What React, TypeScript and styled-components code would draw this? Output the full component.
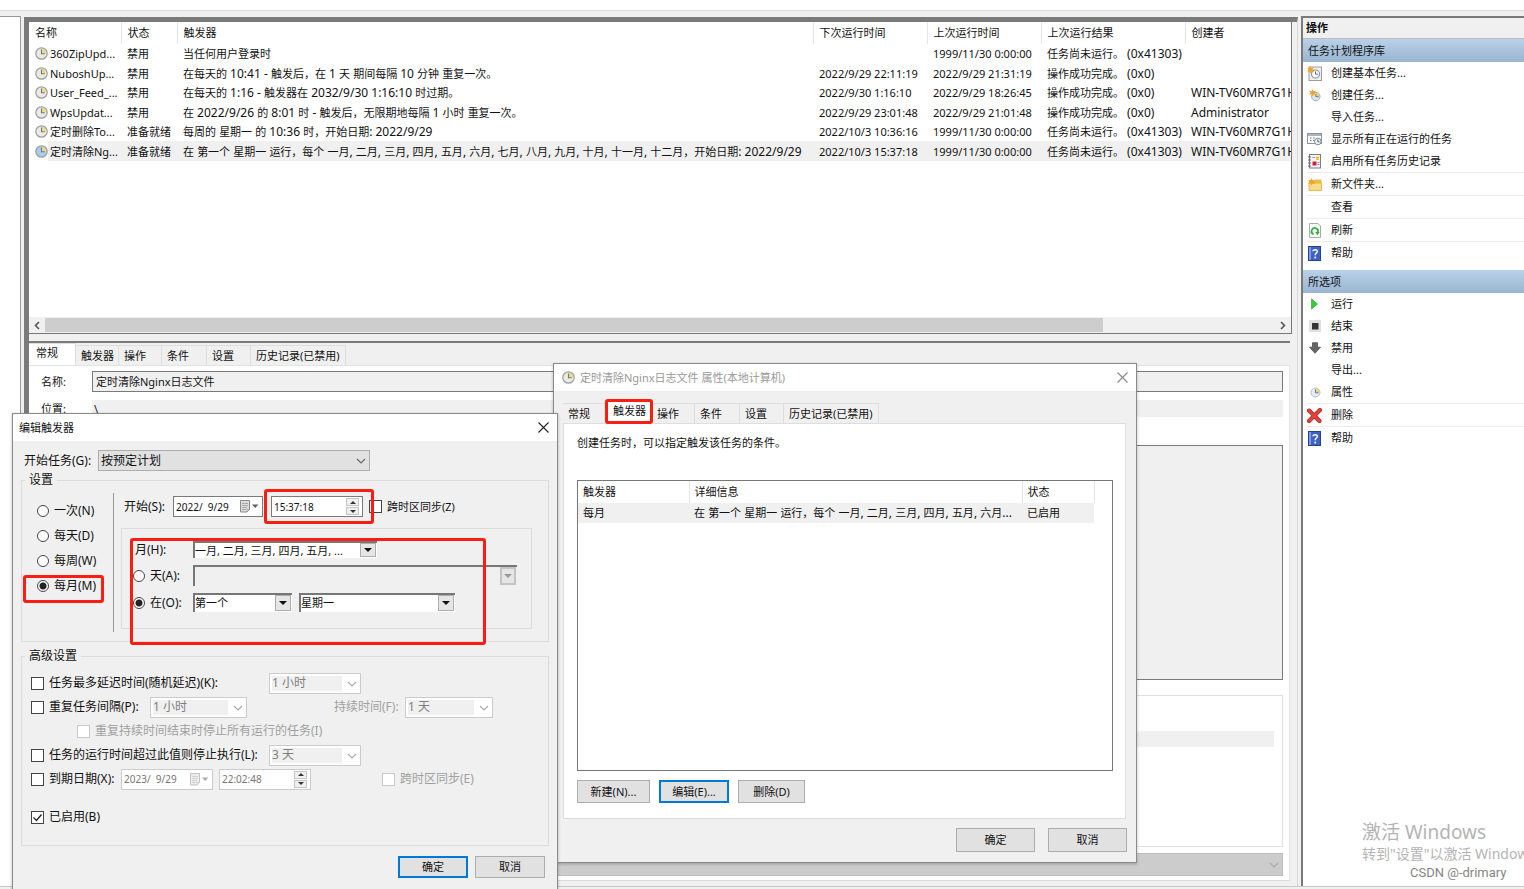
import React from "react";
import styled, { createGlobalStyle, css } from "styled-components";

const GlobalStyle = createGlobalStyle`
  * { box-sizing: border-box; }
  html, body { margin: 0; padding: 0; }
  body, button, input, select, textarea {
    font-family: "Noto Sans", "Noto Sans CJK SC", sans-serif;
    font-size: 11px;
    line-height: 16px;
    color: #111;
  }
`;

/* ---------- window frame ---------- */

const Screen = styled.div`
  position: relative;
  display: flex;
  flex-direction: column;
  height: 100vh;
  min-height: 600px;
  overflow: hidden;
  background: #f0f0f0;
`;

const TopStrip = styled.div`
  height: 11px;
  flex: none;
  background: #fff;
  border-bottom: 1px solid #dcdcdc;
`;

const Workspace = styled.div`
  flex: 1;
  min-height: 0;
  display: flex;
  padding-top: 5px;
`;

const BottomStrip = styled.div`
  height: 3px;
  flex: none;
  border-top: 1px solid #c8c8c8;
`;

const TreePane = styled.aside`
  width: 21px;
  flex: none;
  background: #fff;
  border-top: 1px solid #999;
  border-right: 1px solid #999;
`;

const Center = styled.main`
  flex: 1;
  min-width: 0;
  display: flex;
  flex-direction: column;
  margin: 1px 0 0 3px;
  padding-right: 5px;
  border-left: 5px solid #7a7a7a;
  border-top: 5px solid #7a7a7a;
  border-right: 1px solid #d9d9d9;
`;

const TaskList = styled.section`
  height: 312px;
  flex: none;
  display: flex;
  flex-direction: column;
  background: #fff;
  border-right: 1px solid #777;
  border-bottom: 1px solid #777;
`;

const TableArea = styled.div`
  flex: 1;
  min-height: 0;
  overflow: hidden;
`;

const Latin = styled.span`
  font-size: 12px;
`;

const TaskTable = styled.table`
  width: 100%;
  table-layout: fixed;
  border-collapse: collapse;

  th, td {
    padding: 0 0 0 6px;
    text-align: left;
    font-weight: 400;
    white-space: nowrap;
    overflow: hidden;
  }
  th { height: 22px; border-left: 1px solid #e5e5e5; }
  th:first-child { border-left: 0; }
  td { height: 19px; line-height: 19px; }
  tr:nth-child(even) td { height: 20px; }
`;

const TaskRow = styled.tr<{ $selected?: boolean }>`
  background: ${(p) => (p.$selected ? "#f0f0f0" : "transparent")};
  td:first-child { background: linear-gradient(to right, #fff 19px, transparent 19px); }
`;

const NameCell = styled.div`
  display: flex;
  align-items: center;
  gap: 2px;
  svg { flex: none; }
`;

const ScrollBar = styled.div`
  display: flex;
  height: 16px;
  background: #f0f0f0;
`;

const ScrollButton = styled.button`
  width: 16px;
  padding: 0;
  border: 0;
  background: transparent;
  display: grid;
  place-items: center;
`;

const ScrollTrack = styled.div`
  flex: 1;
`;

const ScrollThumb = styled.div`
  width: 86%;
  height: 14px;
  margin-top: 1px;
  background: #cdcdcd;
`;

const Details = styled.section`
  flex: 1;
  min-height: 0;
  display: flex;
  flex-direction: column;
  margin: 7px 2px 5px 0;
  border-top: 2px solid #7a7a7a;
`;

const TabBar = styled.div`
  display: flex;
  align-items: flex-end;
  height: 22px;
`;

const Tab = styled.button<{ $w: number; $active?: boolean }>`
  position: relative;
  width: ${(p) => p.$w}px;
  height: 20px;
  padding: 0 0 0 5px;
  border: 1px solid #dedede;
  border-left-width: 0;
  border-bottom: 0;
  background: #f0f0f0;
  text-align: left;
  white-space: nowrap;
  ${(p) =>
    p.$active &&
    css`
      height: 22px;
      padding: 0 0 4px 7px;
      background: #fff;
    `}
`;

const DetailsBody = styled.div`
  flex: 1;
  min-height: 0;
  display: flex;
  flex-direction: column;
  padding: 5px 6px 4px 12px;
  background: #fff;
  border-top: 1px solid #e3e3e3;
  border-right: 1px solid #e3e3e3;
  border-bottom: 1px solid #dcdcdc;
`;

const DetailRow = styled.div<{ $mt?: number }>`
  display: flex;
  align-items: center;
  margin-top: ${(p) => p.$mt || 0}px;
  label { width: 51px; }
`;

const NameInput = styled.input`
  flex: 1;
  min-width: 0;
  height: 21px;
  padding: 0 3px 1px;
  background: #f0f0f0;
  border: 1px solid #7a7a7a;
`;

const LocationInput = styled.input`
  flex: 1;
  min-width: 0;
  height: 17px;
  padding: 0 2px;
  border: 0;
  background: #f0f0f0;
`;

const Description = styled.textarea`
  flex: 1;
  min-height: 40px;
  margin: 28px 0 0 51px;
  resize: none;
  background: #f0f0f0;
  border: 1px solid #7a7a7a;
`;

const SecurityBox = styled.div`
  height: 152px;
  margin-top: 15px;
  padding: 35px 8px 0;
  border: 1px solid #e0e0e0;
`;

const AccountBar = styled.div`
  height: 16px;
  background: #f0f0f0;
`;

/* ---------- actions pane ---------- */

const Actions = styled.aside`
  width: 223px;
  flex: none;
  margin-left: 3px;
  background: #fff;
  border-left: 2px solid #7a7a7a;
  border-top: 2px solid #7a7a7a;
`;

const ActionsTitle = styled.h2`
  margin: 0;
  height: 21px;
  padding: 2px 0 0 3px;
  font-size: 11px;
  font-weight: 600;
  background: #f0f0f0;
  border-bottom: 1px solid #bbb;
`;

const SectionTitle = styled.h3`
  margin: 0;
  height: 23px;
  padding: 0 5px;
  font-size: 11px;
  line-height: 23px;
  font-weight: 400;
  background: linear-gradient(#b9d1e8, #9ab5d1);
`;

const ActionList = styled.div`
  margin: 0 0 6px 4px;
`;

const ActionButton = styled.button<{ $sep?: boolean }>`
  display: flex;
  align-items: center;
  gap: 9px;
  width: 100%;
  height: ${(p) => (p.$sep ? 23 : 22)}px;
  padding: 0;
  border: 0;
  border-top: ${(p) => (p.$sep ? "1px solid #ececec" : "0")};
  background: transparent;
  text-align: left;
`;

const IconSlot = styled.span`
  width: 15px;
  height: 16px;
  display: grid;
  place-items: center;
`;

/* ---------- dialogs ---------- */

const Dialog = styled.section<{ $x: number; $y: number; $w: number }>`
  position: absolute;
  left: ${(p) => p.$x}px;
  top: ${(p) => p.$y}px;
  width: ${(p) => p.$w}px;
  background: #f0f0f0;
  border: 1px solid #8a8a8a;
  box-shadow: 0 1px 3px rgba(0, 0, 0, 0.25);
`;

const TitleBar = styled.header<{ $muted?: boolean }>`
  display: flex;
  align-items: center;
  gap: 5px;
  height: 27px;
  padding: 0 8px 0 ${(p) => (p.$muted ? 8 : 6)}px;
  background: #fff;
  color: ${(p) => (p.$muted ? "#999" : "#111")};
`;

const TitleText = styled.span`
  flex: 1;
`;

const CloseButton = styled.button`
  width: 11px;
  height: 16px;
  padding: 0;
  border: 0;
  background: transparent;
  display: grid;
  place-items: center;
`;

const PushButton = styled.button<{ $w: number; $h?: number; $primary?: boolean }>`
  width: ${(p) => p.$w}px;
  height: ${(p) => p.$h || 23}px;
  padding: 0;
  background: #e1e1e1;
  border: ${(p) => (p.$primary ? "2px solid #0078d7" : "1px solid #adadad")};
`;

const Highlight = styled.span<{ $l: number; $t: number; $w: number; $h: number }>`
  position: absolute;
  z-index: 2;
  left: ${(p) => p.$l}px;
  top: ${(p) => p.$t}px;
  width: ${(p) => p.$w}px;
  height: ${(p) => p.$h}px;
  border: 3px solid #fb1e10;
  border-radius: 3px;
  pointer-events: none;
`;

const PropertiesBody = styled.div`
  padding: 10px 9px 10px 9px;
`;

const TabPanel = styled.div`
  margin-right: 1px;
  padding: 11px 12px 15px 13px;
  background: #fff;
  border: 1px solid #dedede;
`;

const Hint = styled.p`
  margin: 0;
`;

const TriggerBox = styled.div`
  height: 291px;
  margin-top: 29px;
  background: #fff;
  border: 1px solid #777;
`;

const TriggerTable = styled.table`
  width: 516px;
  table-layout: fixed;
  border-collapse: collapse;
  th, td {
    padding: 0 0 0 5px;
    text-align: left;
    font-weight: 400;
    white-space: nowrap;
    overflow: hidden;
    text-overflow: ellipsis;
  }
  th { height: 22px; border-right: 1px solid #e5e5e5; }
  td { height: 20px; background: #f0f0f0; }
`;

const ButtonRow = styled.div<{ $mt: number; $gap: number; $end?: boolean }>`
  display: flex;
  justify-content: ${(p) => (p.$end ? "flex-end" : "flex-start")};
  gap: ${(p) => p.$gap}px;
  margin-top: ${(p) => p.$mt}px;
`;

const EditBody = styled.div`
  padding: 9px 8px 20px;
  font-size: 12px;
`;

const StartRow = styled.div`
  display: flex;
  align-items: center;
  height: 21px;
  margin-bottom: 1px;
  padding-left: 3px;
  label { width: 74px; }
`;

const Group = styled.fieldset<{ $h: number; $mt?: number }>`
  height: ${(p) => p.$h}px;
  margin: ${(p) => p.$mt || 0}px 0 0;
  padding: 0;
  min-width: 0;
  border: 1px solid #dcdcdc;
  legend {
    margin-left: 3px;
    padding: 0 4px;
    height: 16px;
  }
`;

const SettingsGrid = styled.div`
  display: grid;
  grid-template-columns: 91px 1px 1fr;
  height: 153px;
`;

const Divider = styled.div`
  margin: 5px 0 9px;
  background: #999;
`;

const RadioColumn = styled.div`
  padding: 10px 0 0 15px;
`;

const Choice = styled.label<{ $h?: number; $w?: number; $ml?: number; $off?: boolean; $small?: boolean }>`
  position: relative;
  display: flex;
  align-items: center;
  gap: 5px;
  height: ${(p) => p.$h || 24}px;
  width: ${(p) => (p.$w ? p.$w + "px" : "auto")};
  margin-left: ${(p) => p.$ml || 0}px;
  font-size: ${(p) => (p.$small ? 11 : 12)}px;
  color: ${(p) => (p.$off ? "#a0a0a0" : "#111")};
  white-space: nowrap;
`;

const Radio = styled.input.attrs({ type: "radio" })`
  appearance: none;
  flex: none;
  width: 12px;
  height: 12px;
  margin: 0;
  border: 1px solid #444;
  border-radius: 50%;
  background: #fff;
  &:checked { background: radial-gradient(circle, #222 3px, #fff 4px); }
`;

const Tick = styled.span`
  position: relative;
  display: grid;
  width: 13px;
  height: 13px;
  flex: none;
  svg { position: absolute; left: 0; top: 0; pointer-events: none; }
`;

const TickInput = styled.input.attrs({ type: "checkbox" })`
  appearance: none;
  width: 13px;
  height: 13px;
  margin: 0;
  border: 1px solid #444;
  background: #fff;
  &:disabled { border-color: #c8c8c8; }
`;

const RightColumn = styled.div`
  padding: 8px 0 0 7px;
`;

const DateRow = styled.div`
  display: flex;
  align-items: center;
  padding-left: 3px;
  > label:first-child { width: 49px; }
`;

const Field = styled.span<{ $w: number; $ml?: number; $off?: boolean }>`
  position: relative;
  display: flex;
  align-items: center;
  flex: none;
  width: ${(p) => p.$w}px;
  height: 21px;
  margin-left: ${(p) => p.$ml || 0}px;
  padding-right: 3px;
  background: #fff;
  border: 1px solid ${(p) => (p.$off ? "#ccc" : "#7a7a7a")};
  input {
    flex: 1;
    min-width: 0;
    padding: 0 0 0 2px;
    border: 0;
    background: transparent;
    font-size: 10px;
    color: ${(p) => (p.$off ? "#777" : "#111")};
    white-space: pre;
  }
`;

const SpinColumn = styled.span`
  display: grid;
  gap: 1px;
`;

const SpinButton = styled.button`
  display: grid;
  place-items: center;
  width: 13px;
  height: 8px;
  padding: 0;
  border: 1px solid #c4c4c4;
  background: #f0f0f0;
`;

const MonthGroup = styled.div`
  position: relative;
  display: flex;
  flex-direction: column;
  gap: 7px;
  width: 411px;
  height: 101px;
  margin-top: 11px;
  padding: 12px 0 0 11px;
  border: 1px solid #dcdcdc;
`;

const MonthRow = styled.div<{ $h: number }>`
  display: flex;
  align-items: center;
  gap: 7px;
  height: ${(p) => p.$h}px;
  > label:first-child { width: 53px; }
`;

const MonthLabel = styled.label`
  padding-left: 2px;
`;

type PickKind = "flat" | "classic" | "off";

const PickBox = styled.span<{ $w: number; $kind: PickKind; $off?: boolean }>`
  position: relative;
  display: block;
  flex: none;
  width: ${(p) => p.$w}px;
  height: ${(p) => (p.$kind === "classic" ? "100%" : "21px")};
  select {
    display: block;
    appearance: none;
    width: 100%;
    height: 100%;
    padding: 0 18px 0 2px;
    border-radius: 0;
    opacity: 1;
    ${(p) =>
      p.$kind === "flat" &&
      css`font-size: 12px; background: #e1e1e1; border: 1px solid #adadad;`}
    ${(p) =>
      p.$kind === "off" &&
      css`
        color: #808080;
        font-size: 12px;
        border: 1px solid #ccc;
        background: linear-gradient(#f0f0f0, #f0f0f0) no-repeat 2px 2px / calc(100% - 20px) calc(100% - 4px) #fff;
      `}
    ${(p) =>
      p.$kind === "classic" &&
      css`
        padding: 0 18px 2px 0;
        background: ${p.$off ? "#f0f0f0" : "#fff"};
        border: 0;
        border-top: 2px solid #777;
        border-left: 2px solid #777;
      `}
  }
`;

const PickArrow = styled.span<{ $kind: PickKind; $off?: boolean }>`
  position: absolute;
  right: 1px;
  top: 2px;
  bottom: 1px;
  width: 16px;
  display: grid;
  place-items: center;
  pointer-events: none;
  ${(p) =>
    p.$kind === "classic" &&
    css`
      background: #e6e6e6;
      border: ${p.$off ? 2 : 1}px solid ${p.$off ? "#c4c4c4" : "#adadad"};
    `}
`;

const AdvancedBody = styled.div`
  padding: 7px 0 0 9px;
`;

const AdvRow = styled.div<{ $mt?: number }>`
  display: flex;
  align-items: center;
  height: 24px;
  margin-top: ${(p) => p.$mt || 0}px;
`;

const DurationLabel = styled.label`
  width: 71px;
  margin-left: 87px;
  color: #a0a0a0;
`;

const AccountPick = styled.span`
  position: relative;
  display: block;
  height: 23px;
  margin-top: 6px;
  select {
    display: block;
    appearance: none;
    width: 100%;
    height: 100%;
    border: 1px solid #bfbfbf;
    border-radius: 0;
    background: #ccc;
    opacity: 1;
  }
`;

const FooterPad = styled.div<{ $r: number }>`
  padding-right: ${(p) => p.$r}px;
`;

/* ---------- corner marks ---------- */

const CornerMark = styled.div`
  position: absolute;
  right: 0;
  bottom: 7px;
  width: 162px;
  overflow: hidden;
  white-space: nowrap;
  color: #b4b4b4;
  pointer-events: none;
`;

const MarkTitle = styled.div`
  font-size: 19px;
  line-height: 24px;
`;

const MarkText = styled.div`
  font-size: 14px;
  line-height: 20px;
`;

const MarkAuthor = styled.div`
  padding-left: 48px;
  font-family: Roboto, sans-serif;
  font-size: 13px;
  line-height: 18px;
  color: #858585;
`;

/* ---------- icons ---------- */

const Clock = ({ size = 13, face = "#eceae0" }: { size?: number; face?: string }) => (
  <svg width={size} height={size} viewBox="0 0 13 13">
    <circle cx="6.5" cy="6.5" r="5.7" fill={face} stroke="#9b9ea3" strokeWidth="1.2" />
    <path d="M6.5 6.5V1.8A4.7 4.7 0 0 1 11.2 6.5Z" fill="#f3dc7c" />
    <path d="M6.5 2.6V6.8H9.8" fill="none" stroke="#6b7a8c" strokeWidth="1.1" />
  </svg>
);

const Chevron = ({ color = "#777", d = "M1 1l4 4 4-4" }: { color?: string; d?: string }) => (
  <svg width="10" height="6" viewBox="0 0 10 6">
    <path d={d} fill="none" stroke={color} strokeWidth="1.1" />
  </svg>
);

const Triangle = ({ color = "#111", w = 8, up }: { color?: string; w?: number; up?: boolean }) => (
  <svg width={w} height={w / 2} viewBox="0 0 8 4">
    <path d={up ? "M0 4L4 0 8 4Z" : "M0 0H8L4 4Z"} fill={color} />
  </svg>
);

const ScrollArrow = ({ right }: { right?: boolean }) => (
  <svg width="6" height="9" viewBox="0 0 6 9">
    <path d={right ? "M1 1l3.5 3.5L1 8" : "M5 1L1.5 4.5 5 8"} fill="none" stroke="#555" strokeWidth="1.6" />
  </svg>
);

const Cross = ({ color }: { color: string }) => (
  <svg width="11" height="11" viewBox="0 0 11 11">
    <path d="M.5 .5l10 10M10.5 .5l-10 10" stroke={color} strokeWidth="1.1" />
  </svg>
);

const CalendarDrop = ({ off }: { off?: boolean }) => (
  <svg width="20" height="13" viewBox="0 0 20 13" opacity={off ? 0.5 : 1}>
    <path d="M1.5 .5h9v9l-2.500 2.500h-6.500z" fill="#dcdcdc" stroke="#8b8b8b" />
    <path d="M3 3.500h6M3 5.500h6M3 7.500h5M3 9.500h4" stroke="#999" strokeWidth=".8" />
    <path d="M8 12V9.500h2.500z" fill="#fff" stroke="#8b8b8b" strokeWidth=".7" />
    <path d="M13 4.500h6.500L16.200 8z" fill="#4f6272" />
  </svg>
);

const HelpIcon = () => (
  <svg width="13" height="15" viewBox="0 0 13 15">
    <rect x=".5" y=".5" width="12" height="14" fill="#3f62c4" stroke="#24418f" />
    <path d="M1 1h2v13H1z" fill="#7f9ae6" />
    <path d="M5 5.200C5 3.200 9.300 3.200 9.300 5.400 9.300 7 7.200 7.200 7.200 9.200" fill="none" stroke="#fff" strokeWidth="1.5" />
    <circle cx="7.200" cy="11.600" r="1" fill="#fff" />
  </svg>
);

const Star = () => (
  <path d="M3.500 0l1 2.300L7 1.800 5.600 3.800 7 6 4.500 5.500 3.500 7.500 2.600 5.400 0 5.600 1.600 3.800 0 1.800l2.600.4z" fill="#f2a324" />
);

const icons: Record<string, React.ReactNode> = {
  basic: (
    <svg width="15" height="15" viewBox="0 0 15 15">
      <rect x="2" y="1" width="12.500" height="13.500" fill="#f0eeee" stroke="#a39b9b" />
      <circle cx="8.500" cy="8" r="4" fill="#fff" stroke="#8894a0" strokeWidth="1.200" />
      <path d="M8.500 5.500V8.200H10.800" fill="none" stroke="#56677a" />
      <Star />
    </svg>
  ),
  create: (
    <svg width="12" height="13" viewBox="0 0 12 13">
      <circle cx="6.800" cy="7.500" r="4.200" fill="#dfe9f2" stroke="#9aaabc" />
      <path d="M6.800 7.500V4A3.500 3.500 0 0 1 10.300 7.500Z" fill="#f3d66c" />
      <path d="M6.800 4.800V7.700H9.600" fill="none" stroke="#5b7590" />
      <Star />
    </svg>
  ),
  running: (
    <svg width="15" height="14" viewBox="0 0 15 14">
      <rect x=".5" y="1.500" width="14" height="10" fill="#fafafa" stroke="#8d949c" />
      <path d="M1 2h13v2H1z" fill="#a9b4c0" />
      <path d="M3 6h1.500M6 6h1.500M3 8.500h1.500M6 8.500h1.500" stroke="#777" />
      <circle cx="10.800" cy="9.500" r="3.300" fill="#eef1f4" stroke="#7d8a96" />
      <path d="M10.800 7.500v2.200h1.700" fill="none" stroke="#50606e" />
    </svg>
  ),
  history: (
    <svg width="13" height="15" viewBox="0 0 13 15">
      <rect x="1.500" y=".5" width="11" height="13.500" fill="#f3f3fa" stroke="#777c94" />
      <path d="M0 3h3M0 6h3M0 9h3M0 12h3" stroke="#666" />
      <rect x="8" y="2.500" width="3" height="3.500" fill="#f1c730" />
      <rect x="4.500" y="7.500" width="4" height="4" fill="#d3272b" />
      <path d="M4.500 3.500h2.500M9.500 8.500h2M9.500 10.500h2" stroke="#8d92b0" />
    </svg>
  ),
  folder: (
    <svg width="14" height="13" viewBox="0 0 14 13">
      <path d="M1 3h5l1-1.500h6.500V12.500H1z" fill="#e9bc4e" />
      <path d="M1 5h12.500v7.500H1z" fill="#f9dc86" stroke="#dba93b" strokeWidth=".7" />
      <Star />
    </svg>
  ),
  refresh: (
    <svg width="12" height="15" viewBox="0 0 12 15">
      <path d="M.5 .5h8.500l2.500 2.500v11.500H.5z" fill="#f8faf8" stroke="#a5aca5" />
      <path d="M4.500 11.200A3.200 3.200 0 1 1 8.700 9.500" fill="none" stroke="#2fae3c" strokeWidth="1.700" />
      <path d="M6.200 9h4.400L8.500 12.200z" fill="#2fae3c" />
    </svg>
  ),
  help: <HelpIcon />,
  run: (
    <svg width="12" height="12" viewBox="0 0 12 12">
      <path d="M2.500 .8l6 5.200-6 5.200z" fill="#3fc43a" stroke="#2b9d2d" strokeWidth=".6" />
    </svg>
  ),
  stop: (
    <svg width="12" height="12" viewBox="0 0 12 12">
      <rect width="12" height="12" fill="#e0e0e0" />
      <rect x="3" y="3" width="6.500" height="6.500" fill="#333" />
    </svg>
  ),
  disable: (
    <svg width="12" height="12" viewBox="0 0 12 12">
      <path d="M3.500 .7h5v4.500h3L6 11.300 .5 5.200h3z" fill="#666" stroke="#444" strokeWidth=".7" />
    </svg>
  ),
  props: (
    <svg width="12" height="12" viewBox="0 0 12 12">
      <circle cx="6.500" cy="6.500" r="4.500" fill="#e6eef5" stroke="#b4bcc4" />
      <path d="M6.500 6.500V2.500A4 4 0 0 1 10.500 6.500Z" fill="#f3d66c" />
      <path d="M6.500 3.500V6.800H9.500" fill="none" stroke="#5b7590" />
    </svg>
  ),
  remove: (
    <svg width="15" height="15" viewBox="0 0 15 15">
      <path d="M2 2.500L12.500 13M13 2L2 13" stroke="#a91e1e" strokeWidth="4" strokeLinecap="round" />
      <path d="M2 2.500L12.500 13M13 2L2 13" stroke="#e8403c" strokeWidth="2.600" strokeLinecap="round" />
    </svg>
  ),
};

/* ---------- small building blocks ---------- */

const MixedText = ({ children }: { children: string }) => (
  <>
    {children
      .split(/([\x20-\x7e]+)/)
      .map((run, i) => (i % 2 ? <Latin key={i}>{run}</Latin> : run))}
  </>
);

const Check = ({ checked, off }: { checked?: boolean; off?: boolean }) => (
  <Tick>
    <TickInput defaultChecked={checked} disabled={off} />
    {checked && (
      <svg width="13" height="13" viewBox="0 0 13 13">
        <path d="M2.500 6.500l3 3 5-6" fill="none" stroke="#222" strokeWidth="1.300" />
      </svg>
    )}
  </Tick>
);

const Picker = (p: { w: number; kind: PickKind; value: string; label?: string; id?: string; off?: boolean }) => (
  <PickBox $w={p.w} $kind={p.kind} $off={p.off}>
    <select id={p.id} aria-label={p.label} disabled={p.off || p.kind === "off"}>
      <option>{p.value}</option>
    </select>
    <PickArrow $kind={p.kind} $off={p.off}>
      {p.kind === "classic" ? (
        <Triangle color={p.off ? "#999" : "#111"} />
      ) : (
        <Chevron color={p.kind === "off" ? "#aaa" : "#666"} />
      )}
    </PickArrow>
  </PickBox>
);

const DateField = ({ value, w, off, id, label }: { value: string; w: number; off?: boolean; id?: string; label?: string }) => (
  <Field $w={w} $off={off}>
    <input id={id} aria-label={label} defaultValue={value} disabled={off} />
    <CalendarDrop off={off} />
  </Field>
);

const TimeField = ({ value, ml, off, children }: { value: string; ml: number; off?: boolean; children?: React.ReactNode }) => (
  <Field $w={92} $ml={ml} $off={off}>
    <input aria-label="时间" defaultValue={value} disabled={off} />
    <SpinColumn>
      <SpinButton aria-label="增加" disabled={off}><Triangle w={6} up color="#333" /></SpinButton>
      <SpinButton aria-label="减少" disabled={off}><Triangle w={6} color="#333" /></SpinButton>
    </SpinColumn>
    {children}
  </Field>
);

const tabs: [string, number][] = [
  ["常规", 43],
  ["触发器", 46],
  ["操作", 43],
  ["条件", 45],
  ["设置", 44],
  ["历史记录(已禁用)", 95],
];

/* ---------- data ---------- */

const tasks = [
  ["360ZipUpd...", "禁用", "当任何用户登录时", "", "1999/11/30 0:00:00", "任务尚未运行。 (0x41303)", ""],
  ["NuboshUp...", "禁用", "在每天的 10:41 - 触发后，在 1 天 期间每隔 10 分钟 重复一次。", "2022/9/29 22:11:19", "2022/9/29 21:31:19", "操作成功完成。 (0x0)", ""],
  ["User_Feed_...", "禁用", "在每天的 1:16 - 触发器在 2032/9/30 1:16:10 时过期。", "2022/9/30 1:16:10", "2022/9/29 18:26:45", "操作成功完成。 (0x0)", "WIN-TV60MR7G1H"],
  ["WpsUpdat...", "禁用", "在 2022/9/26 的 8:01 时 - 触发后，无限期地每隔 1 小时 重复一次。", "2022/9/29 23:01:48", "2022/9/29 21:01:48", "操作成功完成。 (0x0)", "Administrator"],
  ["定时删除To...", "准备就绪", "每周的 星期一 的 10:36 时，开始日期: 2022/9/29", "2022/10/3 10:36:16", "1999/11/30 0:00:00", "任务尚未运行。 (0x41303)", "WIN-TV60MR7G1H"],
  ["定时清除Ng...", "准备就绪", "在 第一个 星期一 运行，每个 一月, 二月, 三月, 四月, 五月, 六月, 七月, 八月, 九月, 十月, 十一月, 十二月，开始日期: 2022/9/29", "2022/10/3 15:37:18", "1999/11/30 0:00:00", "任务尚未运行。 (0x41303)", "WIN-TV60MR7G1H"],
];

type Action = { text: string; icon?: string; sep?: boolean };

const libraryActions: Action[] = [
  { text: "创建基本任务...", icon: "basic" },
  { text: "创建任务...", icon: "create" },
  { text: "导入任务..." },
  { text: "显示所有正在运行的任务", icon: "running" },
  { text: "启用所有任务历史记录", icon: "history" },
  { text: "新文件夹...", icon: "folder", sep: true },
  { text: "查看", sep: true },
  { text: "刷新", icon: "refresh", sep: true },
  { text: "帮助", icon: "help", sep: true },
];

const selectedActions: Action[] = [
  { text: "运行", icon: "run" },
  { text: "结束", icon: "stop" },
  { text: "禁用", icon: "disable" },
  { text: "导出..." },
  { text: "属性", icon: "props" },
  { text: "删除", icon: "remove", sep: true },
  { text: "帮助", icon: "help", sep: true },
];

const ActionItems = ({ items }: { items: Action[] }) => (
  <ActionList>
    {items.map((a) => (
      <ActionButton key={a.text} $sep={a.sep}>
        <IconSlot>{a.icon && icons[a.icon]}</IconSlot>
        {a.text}
      </ActionButton>
    ))}
  </ActionList>
);

/* ---------- panels ---------- */

const TaskListPanel = () => (
  <TaskList>
    <TableArea>
      <TaskTable>
        <colgroup>
          <col width="92" />
          <col width="56" />
          <col width="636" />
          <col width="114" />
          <col width="114" />
          <col width="144" />
          <col />
        </colgroup>
        <thead>
          <tr>
            {["名称", "状态", "触发器", "下次运行时间", "上次运行时间", "上次运行结果", "创建者"].map((h) => (
              <th key={h}>{h}</th>
            ))}
          </tr>
        </thead>
        <tbody>
          {tasks.map((row, r) => (
            <TaskRow key={row[0]} $selected={r === 5}>
              {row.map((cell, c) => (
                <td key={c}>
                  {c === 0 ? (
                    <NameCell>
                      <Clock face={r === 5 ? "#a9cdea" : undefined} />
                      <span>{cell}</span>
                    </NameCell>
                  ) : c === 3 || c === 4 ? (
                    cell
                  ) : (
                    <MixedText>{cell}</MixedText>
                  )}
                </td>
              ))}
            </TaskRow>
          ))}
        </tbody>
      </TaskTable>
    </TableArea>
    <ScrollBar>
      <ScrollButton aria-label="向左滚动"><ScrollArrow /></ScrollButton>
      <ScrollTrack><ScrollThumb /></ScrollTrack>
      <ScrollButton aria-label="向右滚动"><ScrollArrow right /></ScrollButton>
    </ScrollBar>
  </TaskList>
);

const DetailsPanel = () => (
  <Details>
    <TabBar>
      {tabs.map(([name, w], i) => (
        <Tab key={name} $w={i === 0 ? 47 : i === 1 ? 43 : w} $active={i === 0}>{name}</Tab>
      ))}
    </TabBar>
    <DetailsBody>
      <DetailRow>
        <label htmlFor="task-name">名称:</label>
        <NameInput id="task-name" readOnly defaultValue="定时清除Nginx日志文件" />
      </DetailRow>
      <DetailRow $mt={8}>
        <label htmlFor="task-location">位置:</label>
        <LocationInput id="task-location" readOnly defaultValue="\" />
      </DetailRow>
      <Description aria-label="描述" readOnly />
      <SecurityBox><AccountBar /></SecurityBox>
      <AccountPick>
        <select aria-label="配置" disabled><option /></select>
        <PickArrow $kind="off"><Chevron color="#aaa" /></PickArrow>
      </AccountPick>
    </DetailsBody>
  </Details>
);

const PropertiesDialog = () => (
  <Dialog $x={553} $y={363} $w={584} role="dialog" aria-label="属性">
    <TitleBar $muted>
      <Clock />
      <TitleText>定时清除Nginx日志文件 属性(本地计算机)</TitleText>
      <CloseButton aria-label="关闭"><Cross color="#888" /></CloseButton>
    </TitleBar>
    <PropertiesBody>
      <TabBar>
        {tabs.map(([name, w], i) => (
          <Tab key={name} $w={w} $active={i === 1}>
            {name}
            {i === 1 && <Highlight $l={-1} $t={-3} $w={48} $h={25} />}
          </Tab>
        ))}
      </TabBar>
      <TabPanel>
        <Hint>创建任务时，可以指定触发该任务的条件。</Hint>
        <TriggerBox>
          <TriggerTable>
            <colgroup>
              <col width="111" />
              <col width="333" />
              <col width="72" />
            </colgroup>
            <thead>
              <tr><th>触发器</th><th>详细信息</th><th>状态</th></tr>
            </thead>
            <tbody>
              <tr>
                <td>每月</td>
                <td><MixedText>在 第一个 星期一 运行，每个 一月, 二月, 三月, 四月, 五月, 六月...</MixedText></td>
                <td>已启用</td>
              </tr>
            </tbody>
          </TriggerTable>
        </TriggerBox>
        <ButtonRow $mt={9} $gap={9}>
          <PushButton $w={73}>新建(N)...</PushButton>
          <PushButton $w={70} $primary>编辑(E)...</PushButton>
          <PushButton $w={67}>删除(D)</PushButton>
        </ButtonRow>
      </TabPanel>
      <ButtonRow $mt={9} $gap={13} $end>
        <PushButton $w={79} $h={24}>确定</PushButton>
        <PushButton $w={79} $h={24}>取消</PushButton>
      </ButtonRow>
    </PropertiesBody>
  </Dialog>
);

const EditTriggerDialog = () => (
  <Dialog $x={12} $y={413} $w={546} role="dialog" aria-label="编辑触发器">
    <TitleBar>
      <TitleText>编辑触发器</TitleText>
      <CloseButton aria-label="关闭"><Cross color="#222" /></CloseButton>
    </TitleBar>
    <EditBody>
      <StartRow>
        <label htmlFor="begin">开始任务(G):</label>
        <Picker id="begin" w={272} kind="flat" value="按预定计划" />
      </StartRow>
      <Group $h={170}>
        <legend>设置</legend>
        <SettingsGrid>
          <RadioColumn>
            {["一次(N)", "每天(D)", "每周(W)", "每月(M)"].map((t, i) => (
              <Choice key={t} $h={25}>
                <Radio name="period" defaultChecked={i === 3} />
                {t}
                {i === 3 && <Highlight $l={-14} $t={2} $w={81} $h={28} />}
              </Choice>
            ))}
          </RadioColumn>
          <Divider />
          <RightColumn>
            <DateRow>
              <label htmlFor="start-date">开始(S):</label>
              <DateField id="start-date" w={90} value="2022/  9/29" />
              <TimeField ml={8} value="15:37:18">
                <Highlight $l={-8} $t={-8} $w={110} $h={35} />
              </TimeField>
              <Choice $ml={6} $h={21} $small><Check />跨时区同步(Z)</Choice>
            </DateRow>
            <MonthGroup>
              <MonthRow $h={17}>
                <MonthLabel htmlFor="months">月(H):</MonthLabel>
                <Picker id="months" w={184} kind="classic" value="一月, 二月, 三月, 四月, 五月, ..." />
              </MonthRow>
              <MonthRow $h={21}>
                <Choice><Radio name="day-mode" />天(A):</Choice>
                <Picker w={324} kind="classic" value="" off label="天" />
              </MonthRow>
              <MonthRow $h={19}>
                <Choice><Radio name="day-mode" defaultChecked />在(O):</Choice>
                <Picker w={99} kind="classic" value="第一个" label="第几个" />
                <Picker w={156} kind="classic" value="星期一" label="星期" />
              </MonthRow>
              <Highlight $l={8} $t={9} $w={356} $h={107} />
            </MonthGroup>
          </RightColumn>
        </SettingsGrid>
      </Group>
      <Group $h={198} $mt={6}>
        <legend>高级设置</legend>
        <AdvancedBody>
          <AdvRow>
            <Choice $w={238}><Check />任务最多延迟时间(随机延迟)(K):</Choice>
            <Picker w={92} kind="off" value="1 小时" label="延迟时间" />
          </AdvRow>
          <AdvRow>
            <Choice $w={119}><Check />重复任务间隔(P):</Choice>
            <Picker w={97} kind="off" value="1 小时" label="间隔" />
            <DurationLabel htmlFor="duration">持续时间(F):</DurationLabel>
            <Picker id="duration" w={88} kind="off" value="1 天" />
          </AdvRow>
          <AdvRow>
            <Choice $ml={46} $off><Check off />重复持续时间结束时停止所有运行的任务(I)</Choice>
          </AdvRow>
          <AdvRow>
            <Choice $w={238}><Check />任务的运行时间超过此值则停止执行(L):</Choice>
            <Picker w={92} kind="off" value="3 天" label="停止时限" />
          </AdvRow>
          <AdvRow>
            <Choice $w={90}><Check />到期日期(X):</Choice>
            <DateField w={92} value="2023/  9/29" label="到期日期" off />
            <TimeField ml={6} value="22:02:48" off />
            <Choice $ml={71} $off><Check off />跨时区同步(E)</Choice>
          </AdvRow>
          <AdvRow $mt={14}>
            <Choice><Check checked />已启用(B)</Choice>
          </AdvRow>
        </AdvancedBody>
      </Group>
      <FooterPad $r={4}>
        <ButtonRow $mt={10} $gap={7} $end>
          <PushButton $w={70} $h={22} $primary>确定</PushButton>
          <PushButton $w={70} $h={22}>取消</PushButton>
        </ButtonRow>
      </FooterPad>
    </EditBody>
  </Dialog>
);

export default function App() {
  return (
    <>
      <GlobalStyle />
      <Screen>
        <TopStrip />
        <Workspace>
          <TreePane />
          <Center>
            <TaskListPanel />
            <DetailsPanel />
          </Center>
          <Actions>
            <ActionsTitle>操作</ActionsTitle>
            <SectionTitle>任务计划程序库</SectionTitle>
            <ActionItems items={libraryActions} />
            <SectionTitle>所选项</SectionTitle>
            <ActionItems items={selectedActions} />
          </Actions>
        </Workspace>
        <BottomStrip />
        <PropertiesDialog />
        <EditTriggerDialog />
        <CornerMark>
          <MarkTitle>激活 Windows</MarkTitle>
          <MarkText>转到"设置"以激活 Windows</MarkText>
          <MarkAuthor>CSDN @-drimary</MarkAuthor>
        </CornerMark>
      </Screen>
    </>
  );
}
